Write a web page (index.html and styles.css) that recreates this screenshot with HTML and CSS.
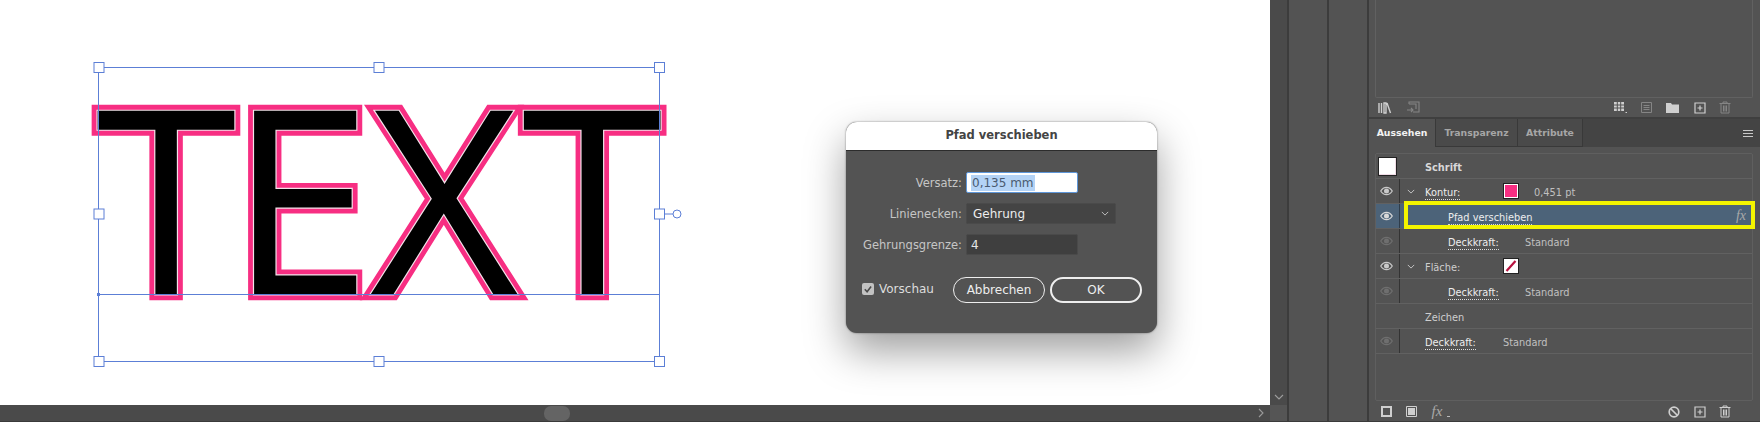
FILE: index.html
```html
<!DOCTYPE html>
<html lang="de">
<head>
<meta charset="utf-8">
<title>Pfad verschieben</title>
<link rel="stylesheet" href="styles.css">
</head>
<body>
<svg class="defs" width="0" height="0" aria-hidden="true">
  <symbol id="eye" viewBox="0 0 14 10"><path d="M.8 5C2.5 2.2 4.6 1 7 1s4.5 1.2 6.2 4C11.500 7.800 9.400 9 7 9S2.500 7.800.8 5z" fill="none" stroke="currentColor" stroke-width="1.300"/><circle cx="7" cy="5" r="2.700" fill="currentColor"/></symbol>
  <symbol id="chev" viewBox="0 0 10 6"><path d="M1 1l4 4 4-4" fill="none" stroke="currentColor" stroke-width="1.100"/></symbol>
  <symbol id="plus" viewBox="0 0 12 12"><path d="M1 1h10v10H1zM6 3.500v5M3.500 6h5" fill="none" stroke="currentColor" stroke-width="1.200"/></symbol>
  <symbol id="trash" viewBox="0 0 12 13"><path d="M.5 2.500h11M4 2.500V1h4v1.500M2 2.500V12h8V2.500M4.500 4.500V10.500M6 4.500V10.500M7.500 4.500V10.500" fill="none" stroke="currentColor" stroke-width="1"/></symbol>
</svg>
<div class="app">
  <div class="doc">
    <div class="canvas">
      <svg class="art" width="1270" height="405" viewBox="0 0 1270 405">
        <defs><text id="word" class="word" x="95.400 229 370 521.600" y="294.300">TEXT</text></defs>
        <use href="#word" class="w-pink"/>
        <use href="#word" class="w-white"/>
        <use href="#word" class="w-black"/>
        <g class="sel">
          <path d="M98.500 67.500H659.500V361.500H98.500zM98.500 294.500H659.500M664 214H673"/>
          <circle cx="677" cy="214" r="4"/>
          <rect x="94" y="62.500" width="10" height="10"/><rect x="374" y="62.500" width="10" height="10"/><rect x="654.500" y="62.500" width="10" height="10"/>
          <rect x="94" y="209" width="10" height="10"/><rect x="654.500" y="209" width="10" height="10"/>
          <rect x="94" y="356.500" width="10" height="10"/><rect x="374" y="356.500" width="10" height="10"/><rect x="654.500" y="356.500" width="10" height="10"/>
          <rect class="dot" x="97" y="293" width="3" height="3"/>
        </g>
      </svg>
      <div class="dialog">
        <div class="dlg-title">Pfad verschieben</div>
        <div class="dlg-body">
          <div class="field"><span class="lbl">Versatz:</span><span class="input focus"><span class="selected">0,135 mm</span></span></div>
          <div class="field"><span class="lbl">Linienecken:</span><span class="input wide"><span class="sel-text">Gehrung</span><svg class="sel-chev" width="8" height="5"><use href="#chev"/></svg></span></div>
          <div class="field"><span class="lbl">Gehrungsgrenze:</span><span class="input">4</span></div>
          <div class="dlg-actions">
            <label class="check"><span class="box"><svg width="12" height="12" viewBox="0 0 12 12"><path d="M2.800 6.200l2.300 2.500 4-5.200" fill="none" stroke="#4a4a4a" stroke-width="1.600"/></svg></span>Vorschau</label>
            <span class="btn">Abbrechen</span>
            <span class="btn primary">OK</span>
          </div>
        </div>
      </div>
    </div>
    <div class="vbar"><svg class="vchev" width="10" height="6"><use href="#chev"/></svg></div>
    <div class="hbar"><span class="thumb"></span><svg class="hchev" width="6" height="10" viewBox="0 0 6 10"><path d="M1 1l4 4-4 4" fill="none" stroke="#9a9a9a" stroke-width="1.100"/></svg></div>
    <div class="corner"></div>
  </div>
  <div class="dock"></div>
  <div class="dock"></div>
  <div class="panel">
    <div class="upper">
      <div class="upper-box"></div>
      <div class="tools top-tools">
        <svg class="ic" width="14" height="12" viewBox="0 0 14 12"><path d="M1 1v10M3.500 1v10M6 1h2v10H6zM9 1l3.500 10" fill="none" stroke="currentColor" stroke-width="1.400"/></svg>
        <svg class="ic dim gap-a" width="14" height="13" viewBox="0 0 14 13"><path d="M3 3V1h10v10H7M1 9h6M5 7l2 2-2 2M3 3h7v5" fill="none" stroke="currentColor" stroke-width="1.100"/></svg>
        <svg class="ic gap-b" width="13" height="12" viewBox="0 0 13 12"><path d="M0 0h10v9H0z" fill="currentColor"/><path d="M3.300 0v9M6.700 0v9M0 3h10M0 6h10" stroke="#535353"/><path d="M11.500 10.500h2" stroke="currentColor"/></svg>
        <svg class="ic dim gap-c" width="11" height="11" viewBox="0 0 11 11"><path d="M.5.500h10v10H.5zM2.500 3.500h6M2.500 5.500h6M2.500 7.500h6" fill="none" stroke="currentColor"/></svg>
        <svg class="ic gap-d" width="13" height="10" viewBox="0 0 13 10"><path d="M0 0h5l1 1.500h7V10H0z" fill="currentColor"/></svg>
        <svg class="ic gap-e" width="12" height="12"><use href="#plus"/></svg>
        <svg class="ic dim gap-f" width="12" height="13"><use href="#trash"/></svg>
      </div>
    </div>
    <div class="tabs">
      <span class="tab active">Aussehen</span>
      <span class="tab t2">Transparenz</span>
      <span class="tab t3">Attribute</span>
      <span class="burger"></span>
    </div>
    <div class="list">
      <div class="row">
        <span class="thumbnail"></span>
        <span class="name strong">Schrift</span>
      </div>
      <div class="row">
        <span class="eye"><svg width="13" height="10"><use href="#eye"/></svg></span>
        <span class="twisty"><svg width="8" height="5"><use href="#chev"/></svg></span>
        <span class="name"><u class="link">Kontur:</u></span>
        <span class="swatch"><i class="pink"></i></span>
        <span class="val stroke-val">0,451 pt</span>
      </div>
      <div class="row current">
        <span class="eye"><svg width="13" height="10"><use href="#eye"/></svg></span>
        <span class="effect"><u class="link">Pfad verschieben</u></span>
        <span class="fx">fx</span>
      </div>
      <div class="row">
        <span class="eye off"><svg width="13" height="10"><use href="#eye"/></svg></span>
        <span class="twisty"></span>
        <span class="name sub"><u class="link">Deckkraft:</u></span>
        <span class="val">Standard</span>
      </div>
      <div class="row">
        <span class="eye"><svg width="13" height="10"><use href="#eye"/></svg></span>
        <span class="twisty"><svg width="8" height="5"><use href="#chev"/></svg></span>
        <span class="name plain">Fläche:</span>
        <span class="swatch"><svg width="12" height="12" viewBox="0 0 12 12"><path d="M1.500 11L10.500 1" stroke="#b8123f" stroke-width="2.200"/></svg></span>
      </div>
      <div class="row">
        <span class="eye off"><svg width="13" height="10"><use href="#eye"/></svg></span>
        <span class="twisty"></span>
        <span class="name sub"><u class="link">Deckkraft:</u></span>
        <span class="val">Standard</span>
      </div>
      <div class="row">
        <span class="spacer"></span>
        <span class="name plain">Zeichen</span>
      </div>
      <div class="row">
        <span class="eye off"><svg width="13" height="10"><use href="#eye"/></svg></span>
        <span class="twisty"></span>
        <span class="name"><u class="link">Deckkraft:</u></span>
        <span class="val">Standard</span>
      </div>
    </div>
    <div class="tools bottom-tools">
      <svg class="ic" width="11" height="11" viewBox="0 0 11 11"><path d="M1 1h9v9H1z" fill="none" stroke="currentColor" stroke-width="2"/></svg>
      <svg class="ic gap-g" width="11" height="11" viewBox="0 0 11 11"><path d="M.5.500h10v10H.5z" fill="none" stroke="currentColor"/><path d="M2 2h7v7H2z" fill="currentColor"/></svg>
      <span class="fx bar-fx">fx<i class="dotmark"></i></span>
      <svg class="ic gap-h" width="12" height="12" viewBox="0 0 12 12"><circle cx="6" cy="6" r="4.800" fill="none" stroke="currentColor" stroke-width="1.700"/><path d="M2.500 2.500l7 7" stroke="currentColor" stroke-width="1.700"/></svg>
      <svg class="ic gap-e" width="12" height="12"><use href="#plus"/></svg>
      <svg class="ic gap-f" width="12" height="13"><use href="#trash"/></svg>
    </div>
  </div>
</div>
</body>
</html>
```

FILE: styles.css
```css
* { box-sizing: border-box; }
html, body { margin: 0; height: 100%; }
body { overflow: hidden; background: #535353; font-family: "DejaVu Sans", sans-serif; }
.defs { position: absolute; }

.app { display: flex; width: 1760px; height: 422px; border-bottom: 1px solid #3a3a3a; }

/* document area */
.doc { display: grid; grid-template-columns: 1270px 17px; grid-template-rows: 405px 1fr; flex: none; }
.canvas { position: relative; background: #fff; }
.art { display: block; }
.word { font-family: "Open Sans", sans-serif; font-size: 257px; font-weight: 500; }
.w-pink { fill: #f72e82; stroke: #f72e82; stroke-width: 12px; stroke-linejoin: miter; stroke-miterlimit: 4; }
.w-white { fill: #fff; stroke: #f3e3ea; stroke-width: 2.400px; stroke-linejoin: miter; stroke-miterlimit: 4; }
.w-black { fill: #000; }
.sel path { fill: none; stroke: #5c7fd6; stroke-width: 1; }
.sel rect { fill: #fff; stroke: #5c7fd6; stroke-width: 1; }
.sel circle { fill: #fff; stroke: #5c7fd6; stroke-width: 1; }
.sel .dot { fill: #5c7fd6; stroke: none; }

.vbar { background: #4a4a4a; display: flex; align-items: flex-end; justify-content: center; padding-bottom: 5px; color: #9d9d9d; }
.vchev { display: block; }
.hbar { position: relative; background: #4a4a4a; display: flex; align-items: center; justify-content: space-between; padding: 0 6px 0 544px; }
.thumb { width: 26px; height: 15px; border-radius: 7px; background: #646464; }
.corner { background: #555; }

.dock { width: 40px; flex: none; background: #535353; border-left: 2px solid #3c3c3c; }

/* dialog */
.dialog { position: absolute; left: 846px; top: 122px; width: 311px; height: 211px; border-radius: 11px; overflow: hidden; background: #535353; box-shadow: 0 18px 40px rgba(0,0,0,.38), 0 0 2px rgba(0,0,0,.5); }
.dlg-title { height: 29px; background: #fff; border-bottom: 1px solid #2c2c2c; text-align: center; font-size: 11.500px; line-height: 27px; font-weight: 700; color: #444; }
.dlg-body { padding: 21px 15px 0 16px; }
.field { display: flex; align-items: center; height: 21px; margin-bottom: 10px; }
.lbl { width: 104px; padding-right: 4px; text-align: right; font-size: 11.500px; color: #c6c6c6; white-space: nowrap; }
.input { width: 112px; height: 21px; display: flex; align-items: center; padding-left: 4px; background: #3f3f3f; border: 1px solid #4a4a4a; border-radius: 2px; font-size: 12px; color: #e6e6e6; }
.input.wide { width: 150px; justify-content: space-between; padding: 0 6px; background: #444; }
.input.focus { background: #fff; border-color: #5e96d8; color: #4a5a70; }
.selected { background: #b4d3f6; padding: 0 1px; line-height: 16px; }
.sel-text { color: #eee; }
.sel-chev { color: #ccc; }
.dlg-actions { display: flex; align-items: center; margin-top: 22px; }
.check { display: flex; align-items: center; width: 91px; margin-top: -2px; font-size: 12px; color: #ddd; }
.box { width: 12px; height: 12px; margin-right: 5px; border-radius: 2px; background: #c2c2c2; display: block; }
.box svg { display: block; }
.btn { width: 92px; height: 26px; margin-right: 5px; border: 1px solid #eee; border-radius: 13px; font-size: 12px; line-height: 24px; text-align: center; color: #eee; }
.btn.primary { border-width: 2px; line-height: 22px; margin-right: 0; }

/* right panel */
.panel { flex: 1; min-width: 0; display: flex; flex-direction: column; border-left: 2px solid #3c3c3c; background: #535353; }
.upper { height: 119px; border-bottom: 2px solid #3f3f3f; padding: 0 7px 0 6px; flex: none; }
.upper-box { height: 98px; border: 1px solid #616161; border-top: 0; border-radius: 0 0 2px 2px; }
.tools { display: flex; align-items: center; color: #cfcfcf; }
.top-tools { height: 19px; padding-left: 3px; }
.ic { display: block; flex: none; }
.ic.dim { color: #858585; }
.gap-a { margin-left: 14px; }
.gap-b { margin-left: 194px; }
.gap-c { margin-left: 14px; }
.gap-d { margin-left: 14px; }
.gap-e { margin-left: 14.500px; }
.gap-f { margin-left: 13px; }
.gap-g { margin-left: 13.500px; }
.gap-h { margin-left: 222px; }

.tabs { position: relative; display: flex; height: 28px; flex: none; background: #444; font-size: 9.300px; font-weight: 700; line-height: 27px; }
.tab { color: #a6a6a6; text-align: center; border-right: 1px solid #393939; border-bottom: 1px solid #393939; background: #4a4a4a; }
.tab.active { width: 67px; background: #535353; color: #f2f2f2; border-bottom: 0; }
.t2 { width: 82px; }
.t3 { width: 65px; }
.burger { position: absolute; right: 7px; top: 11px; width: 10px; height: 7px; border-top: 1px solid #c8c8c8; border-bottom: 1px solid #c8c8c8; }
.burger::after { content: ""; display: block; height: 1px; margin-top: 2px; background: #c8c8c8; }

.list { margin: 6px 7px 0 6px; height: 248px; border: 1px solid #5f5f5f; border-radius: 2px; flex: none; font-size: 9.800px; }
.row { position: relative; display: flex; align-items: center; height: 25px; border-bottom: 1px solid #616161; color: #e6e6e6; white-space: nowrap; }
.eye { width: 24px; height: 24px; display: flex; align-items: center; justify-content: center; padding-right: 2px; border-right: 1px solid #333; color: #c9c9c9; flex: none; }
.eye.off { color: #6f6f6f; }
.spacer { width: 49px; flex: none; }
.twisty { width: 25px; display: flex; justify-content: flex-start; padding-left: 7px; color: #d0d0d0; flex: none; }
.twisty svg, .eye svg { display: block; }
.name, .val, .effect { padding-top: 2px; }
.name { width: 78px; flex: none; }
.name.sub { width: 100px; padding-left: 23px; }
.name.strong { width: auto; margin-left: 28px; font-weight: 700; color: #d8d8d8; }
.name.plain { color: #cfcfcf; }
.link { text-decoration: none; border-bottom: 1px dotted #ddd; padding-bottom: 1px; color: #eee; }
.val { color: #c0c0c0; }
.stroke-val { margin-left: 15px; }
.swatch { width: 16px; height: 16px; display: flex; align-items: center; justify-content: center; background: #fff; border: 1px solid #222; flex: none; }
.pink { display: block; width: 12px; height: 12px; background: #f72e82; }
.swatch svg { display: block; }
.thumbnail { width: 19px; height: 19px; margin-left: 2px; background: #fff; border: 1px solid #222; box-shadow: inset -1px -1px 0 #f0dce6; flex: none; }
.current { background: #4c6379; }
.current .eye { border-right-color: #2f3d4a; color: #d8d8d8; }
.current::after { content: ""; position: absolute; left: 28px; right: -3px; top: -3px; bottom: -1px; border: 4px solid #f4f500; pointer-events: none; }
.effect { margin-left: 48px; }
.fx { font-family: "Liberation Serif", serif; font-style: italic; font-size: 14px; color: #a9a9a9; }
.current .fx { position: absolute; right: 6px; top: 4px; }
.bottom-tools { height: 19px; margin-top: 1px; padding-left: 12px; }
.bar-fx { position: relative; margin-left: 15px; width: 14px; font-size: 15px; }
.dotmark { position: absolute; right: -4px; bottom: 3px; width: 3px; height: 1px; background: #bbb; }
```
